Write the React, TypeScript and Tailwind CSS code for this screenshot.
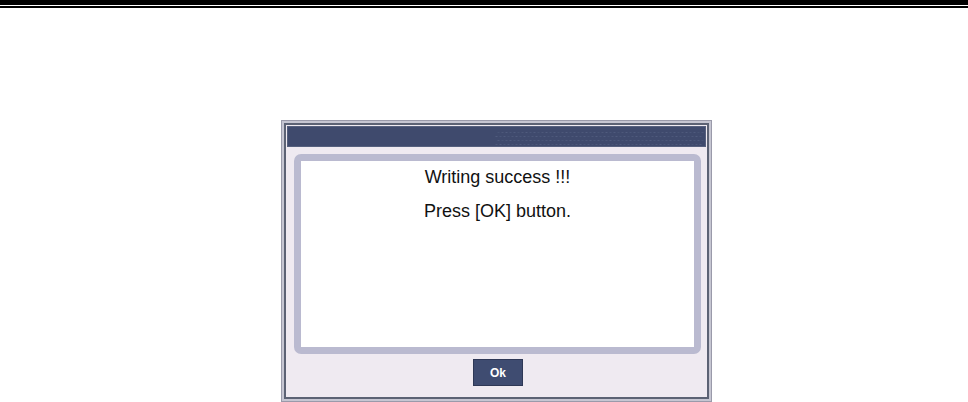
import React from 'react';

const TitleTexture = () => (
  <svg width="210" height="21" viewBox="0 0 210 21" className="block">
    {[5, 9, 13, 17].map((y) =>
      Array.from({ length: 52 }).map((_, i) => (
        <rect
          key={`${y}-${i}`}
          x={i * 4 + ((y / 4) % 2) * 2}
          y={y}
          width="2"
          height="1"
          fill="#5a6688"
          opacity={0.35 + ((i * 7 + y) % 5) * 0.08}
        />
      )),
    )}
  </svg>
);

const App = () => {
  return (
    <div
      className="w-[968px] h-[402px] bg-white overflow-hidden"
      style={{ fontFamily: '"Liberation Sans", Arial, sans-serif' }}
    >
      <div className="h-[5px] bg-black" />
      <div className="h-[1px]" />
      <div className="h-[2px] bg-black" />

      <div className="ml-[281px] mt-[112px] w-[431px] h-[282px] border border-[#9a9aaa] bg-[#c6c6d2] p-[2px]">
        <div className="h-full border-2 border-[#5c6274] bg-[#efeaf1] p-[1px] flex flex-col">
          {/* title bar */}
          <div className="h-[21px] bg-[#3f4a6d] border border-[#56607e] flex justify-end overflow-hidden">
            <TitleTexture />
          </div>

          {/* message panel */}
          <div className="mt-[7px] ml-[7px] w-[407px] h-[200px] rounded-[7px] border-[7px] border-[#babad0] bg-white flex flex-col items-center pt-[1px]">
            <p className="text-[18px] leading-[30px] text-[#111]">Writing success !!!</p>
            <p className="text-[18px] leading-[30px] text-[#111] mt-[4px]">Press [OK] button.</p>
          </div>

          {/* button row */}
          <div className="flex justify-center mt-[5px] pl-[3px]">
            <button className="w-[50px] h-[27px] bg-[#3f4c71] border border-[#2e3856] text-white text-[12px] font-bold">
              Ok
            </button>
          </div>
        </div>
      </div>
    </div>
  );
};

export default App;
